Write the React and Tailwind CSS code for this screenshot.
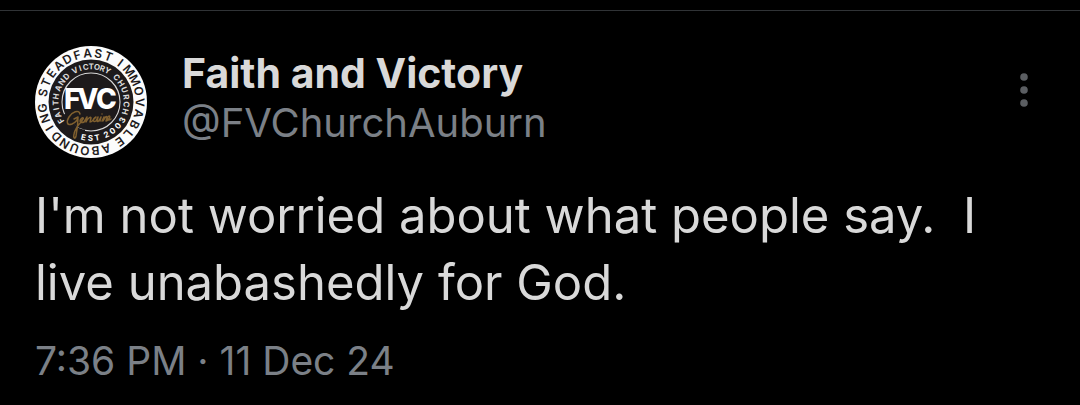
const outerWords = [
  { word: 'STEADFAST', from: 281, to: 381 },
  { word: 'IMMOVABLE', from: 37, to: 144 },
  { word: 'ABOUNDING', from: 162, to: 263 },
];

const innerWords = [
  { word: 'FAITH', from: 238, to: 279 },
  { word: 'AND', from: 293, to: 316 },
  { word: 'VICTORY', from: 333, to: 388 },
  { word: 'CHURCH', from: 46, to: 106 },
];

const footWords = [
  { word: 'EST', from: 192, to: 170 },
  { word: '2003', from: 155, to: 120 },
];

function RingWord({ word, from, to, radius, size, upright, fill }) {
  const step = (to - from) / (word.length - 1);
  return word.split('').map((letter, i) => {
    const angle = from + step * i;
    const rad = (angle * Math.PI) / 180;
    const x = 56 + radius * Math.sin(rad);
    const y = 56 - radius * Math.cos(rad);
    const turn = upright ? angle + 180 : angle;
    return (
      <text
        key={i}
        transform={`translate(${x} ${y}) rotate(${turn})`}
        y={size * 0.36}
        textAnchor="middle"
        fontSize={size}
        fill={fill}
      >
        {letter}
      </text>
    );
  });
}

function ChurchBadge() {
  return (
    <svg
      viewBox="0 0 112 112"
      role="img"
      aria-label="Faith and Victory Church"
      className="size-28 shrink-0 font-['Inter',sans-serif]"
    >
      <circle cx="56" cy="56" r="56" fill="#fcfcfc" />
      <circle cx="56" cy="56" r="42.5" fill="#1d1a1b" />
      <circle cx="56" cy="56" r="29" fill="none" stroke="#d8d8d8" strokeWidth="1.1" />
      <path d="M30 68 Q38 86 50 86" fill="none" stroke="#1d1a1b" strokeWidth="5" />
      <g fontWeight="600">
        {outerWords.map((w) => (
          <RingWord key={w.word} {...w} radius={49} size={12} fill="#1d1a1b" />
        ))}
      </g>
      <g fontWeight="700">
        {innerWords.map((w) => (
          <RingWord key={w.word} {...w} radius={35.5} size={8} fill="#dcdcdc" />
        ))}
        {footWords.map((w) => (
          <RingWord key={w.word} {...w} radius={36} size={8} fill="#ffffff" upright />
        ))}
      </g>
      <text x="29 42 61" y="63" fontSize="28" fontWeight="800" fill="#ffffff">
        FVC
      </text>
      <g fill="none" stroke="#80602f" strokeWidth="1.5" strokeLinecap="round" strokeLinejoin="round">
        <path d="M45 68 C44 63 37 66 34 71 C31 76 32 80 37 78 C41 76 43 73 43 71 L39 73 M43 71 C43 79 42 85 41 90 C40 94 38 92 39 88 C40 83 44 78 47 75" />
        <path d="M45 75 C49 74 49 71 47 72 C44 74 45 78 49 76 L52 71 L51 76 C53 72 56 70 56 72 L55 76 C58 76 59 72 61 71 C57 73 58 77 61 75 L63 71 L62 75 C63 77 65 73 66 71 L65 75 M67 68 L67 68 M67 75 L69 71 L68 75 C70 71 72 69 72 72 L71 75 C74 74 76 70 74 70 C71 72 72 76 76 73" />
      </g>
    </svg>
  );
}

export default function App() {
  return (
    <main className="min-h-screen bg-black pt-[10px] font-['Inter',sans-serif]">
      <article className="border-t border-[#303336] px-[35px] pt-[35px] pb-5">
        <header className="flex items-start">
          <ChurchBadge />
          <div className="ml-[35px] min-w-0 flex-1 pt-[2px]">
            <h1 className="text-[41px] leading-[50px] font-bold text-[#d9d9d9]">Faith and Victory</h1>
            <p className="text-[40px] leading-[50px] text-[#7b8087]">@FVChurchAuburn</p>
          </div>
          <button type="button" aria-label="More options" className="mt-[25px] mr-4 shrink-0">
            <svg viewBox="0 0 10 40" className="h-10 w-[10px]" fill="#5b5e62" aria-hidden="true">
              <circle cx="5" cy="6" r="3.8" />
              <circle cx="5" cy="19" r="3.8" />
              <circle cx="5" cy="32" r="3.8" />
            </svg>
          </button>
        </header>
        <p className="mt-6 text-[49px] leading-[67px] whitespace-pre-wrap text-[#d9d9d9]">
          {"I'm not worried about what people say.  I live unabashedly for God."}
        </p>
        <p className="mt-5 text-[39px] leading-[50px] text-[#7b8087]">
          <time dateTime="2024-12-11T19:36">7:36 PM · 11 Dec 24</time>
        </p>
      </article>
    </main>
  );
}
